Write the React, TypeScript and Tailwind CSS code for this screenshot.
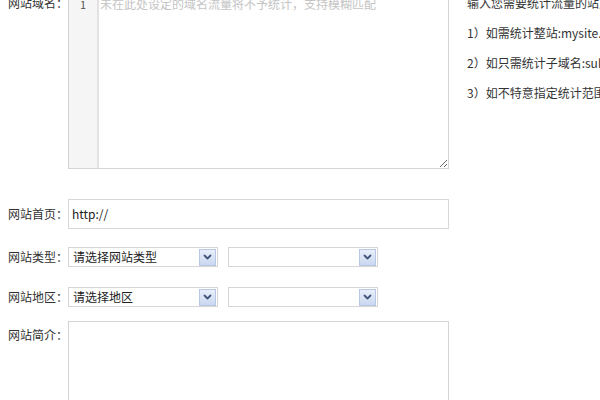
import type { JSX } from "react";

const FONT = "[font-family:'Noto_Sans_CJK_SC','Liberation_Sans',sans-serif]";

const Label = ({ text, className = "" }: { text: string; className?: string }): JSX.Element => (
  <div className={`w-[60px] shrink-0 text-[12px] leading-[16px] text-[#333] ${className}`}>{text}</div>
);

const Chevron = (): JSX.Element => (
  <span className="flex h-[17px] w-[17px] items-center justify-center border border-[#b8c8e4] bg-gradient-to-b from-[#e8effb] to-[#c9d7ef]">
    <svg width="9" height="6" viewBox="0 0 9 6" fill="none" stroke="#42557a" strokeWidth={1.8} strokeLinecap="round" strokeLinejoin="round">
      <path d="M1.5 1.5 4.5 4.5 7.5 1.5" />
    </svg>
  </span>
);

const Select = ({ value }: { value?: string }): JSX.Element => (
  <div className="flex h-[20px] w-[150px] items-center justify-between border border-[#d6d6d6] bg-white pl-[4px] pr-[1px]">
    <span className="text-[12px] leading-[16px] text-[#222]">{value ?? ""}</span>
    <Chevron />
  </div>
);

export default function App(): JSX.Element {
  return (
    <div className={`h-[400px] w-[600px] overflow-hidden bg-white ${FONT}`}>
      <div className="-mt-[7px] flex flex-col pl-[8px]">
        {/* 网站域名 */}
        <div className="flex">
          <Label text="网站域名：" className="pt-[2px]" />
          <div className="flex h-[176px] w-[381px] shrink-0 border border-[#d4d4d4] bg-white">
            <div className="w-[30px] shrink-0 border-r-2 border-[#e2e2e2] bg-[#f5f5f5] pt-[2px] text-center text-[11px] leading-[16px] text-[#555]">
              1
            </div>
            <textarea
              readOnly
              placeholder="未在此处设定的域名流量将不予统计，支持模糊匹配"
              className="h-full min-w-0 flex-1 resize-y bg-white px-[1px] pt-[2px] text-[12px] leading-[16px] text-[#333] outline-none placeholder:text-[#c4c4c4]"
            />
          </div>
          <div className="ml-[18px] flex shrink-0 flex-col gap-[14px] whitespace-nowrap pt-[2px] text-[12px] leading-[16px] text-[#333]">
            <span>输入您需要统计流量的站点域名</span>
            <span>1）如需统计整站:mysite.com</span>
            <span>2）如只需统计子域名:sub.mysite.com</span>
            <span>3）如不特意指定统计范围</span>
          </div>
        </div>

        {/* 网站首页 */}
        <div className="mt-[30px] flex items-center">
          <Label text="网站首页：" />
          <div className="flex h-[30px] w-[381px] items-center border border-[#d8d8d8] bg-white px-[3px] text-[12px] text-[#222]">
            http://
          </div>
        </div>

        {/* 网站类型 */}
        <div className="mt-[18px] flex items-center">
          <Label text="网站类型：" />
          <div className="flex gap-[10px]">
            <Select value="请选择网站类型" />
            <Select />
          </div>
        </div>

        {/* 网站地区 */}
        <div className="mt-[20px] flex items-center">
          <Label text="网站地区：" />
          <div className="flex gap-[10px]">
            <Select value="请选择地区" />
            <Select />
          </div>
        </div>

        {/* 网站简介 */}
        <div className="mt-[14px] flex">
          <Label text="网站简介：" className="pt-[6px]" />
          <textarea
            readOnly
            className="h-[100px] w-[381px] resize-y border border-[#d4d4d4] bg-white outline-none"
          />
        </div>
      </div>
    </div>
  );
}
